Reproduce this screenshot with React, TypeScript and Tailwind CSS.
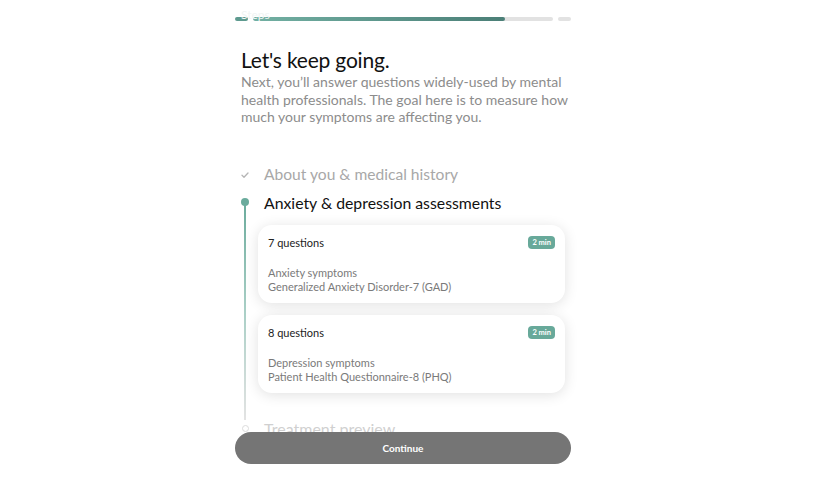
import React from "react";

const font = { fontFamily: "Lato, 'Open Sans', sans-serif" };

function Card({ count, title, sub }: { count: string; title: string; sub: string }) {
  return (
    <div className="rounded-[14px] bg-white shadow-[0_2px_14px_rgba(0,0,0,0.12)] px-[10px] pt-[10px] pb-[12px] h-[78px]">
      <div className="flex items-center justify-between">
        <span className="text-[11px] text-[#222] leading-[14px] mt-[1px]">{count}</span>
        <span className="rounded-[4px] bg-[#68a99a] text-white text-[7.5px] font-bold px-[4px] h-[13px] leading-[13px]">2 min</span>
      </div>
      <div className="mt-[16px] text-[11px] text-[#7a7a7a] leading-[14px]">
        <div>{title}</div>
        <div>{sub}</div>
      </div>
    </div>
  );
}

export default function App() {
  return (
    <div className="relative w-[826px] h-[493px] bg-white overflow-hidden" style={font}>
      <div className="ml-[235px] w-[336px] pt-[16px]">
        <div className="relative flex items-center gap-[5px] h-[5px]">
          <div className="w-[13px] h-[4px] rounded-full bg-[#5e9a8f]" />
          <div className="flex-1 h-[4px] rounded-full bg-[#e2e2e2] overflow-hidden">
            <div className="h-full w-[84%] rounded-full bg-gradient-to-r from-[#72b0a3] to-[#4b7f77]" />
          </div>
          <div className="w-[13px] h-[4px] rounded-full bg-[#e2e2e2]" />
          <span className="absolute left-[6px] -top-[10px] text-[12px] text-[#f0f4f3]">Steps</span>
        </div>

        <div className="pl-[6px] mt-[26px]">
          <h1 className="text-[21px] leading-[26px] text-[#111] tracking-[-0.2px]">Let's keep going.</h1>
          <p className="text-[14px] leading-[17.5px] text-[#8c8c8c]">
            Next, you’ll answer questions widely-used by mental health professionals. The goal here is to measure how much your symptoms are affecting you.
          </p>
        </div>

        <div className="relative mt-[37px]">
          <div className="flex items-center h-[24px]">
            <div className="w-[20px] flex justify-center">
              <svg width="10" height="10" viewBox="0 0 10 10" fill="none" stroke="#b5b5b5" strokeWidth="1.3" strokeLinecap="round" strokeLinejoin="round">
                <path d="M2 5.3 L4 7.2 L8 3" />
              </svg>
            </div>
            <span className="ml-[9px] text-[15.6px] text-[#a8a8a8]">About you &amp; medical history</span>
          </div>

          <div className="flex mt-[5px]">
            <div className="w-[20px] relative flex justify-center">
              <div className="absolute top-[6px] w-[8px] h-[8px] rounded-full bg-[#6aab9c]" />
              <div className="absolute top-[10px] w-[2px] h-[218px] bg-gradient-to-b from-[#6aab9c] via-[#a9cfc6] to-[#e3e3e3]" />
            </div>
            <div className="flex-1 ml-[3px]">
              <div className="ml-[6px] text-[15.8px] leading-[22px] text-[#111]">Anxiety &amp; depression assessments</div>
              <div className="mt-[11px] mr-[6px] flex flex-col gap-[12px]">
                <Card count="7 questions" title="Anxiety symptoms" sub="Generalized Anxiety Disorder-7 (GAD)" />
                <Card count="8 questions" title="Depression symptoms" sub="Patient Health Questionnaire-8 (PHQ)" />
              </div>
            </div>
          </div>

          <div className="flex items-center mt-[24px]">
            <div className="w-[20px] flex justify-center">
              <div className="w-[7px] h-[7px] rounded-full border border-[#dcdcdc] bg-white" />
            </div>
            <span className="ml-[9px] text-[16px] text-[#d0d0d0]">Treatment preview</span>
          </div>
        </div>
      </div>

      <div className="absolute left-[235px] top-[432px] w-[336px] h-[32px] rounded-full bg-[#757575] flex items-center justify-center">
        <span className="text-white text-[10px] font-bold">Continue</span>
      </div>
    </div>
  );
}
